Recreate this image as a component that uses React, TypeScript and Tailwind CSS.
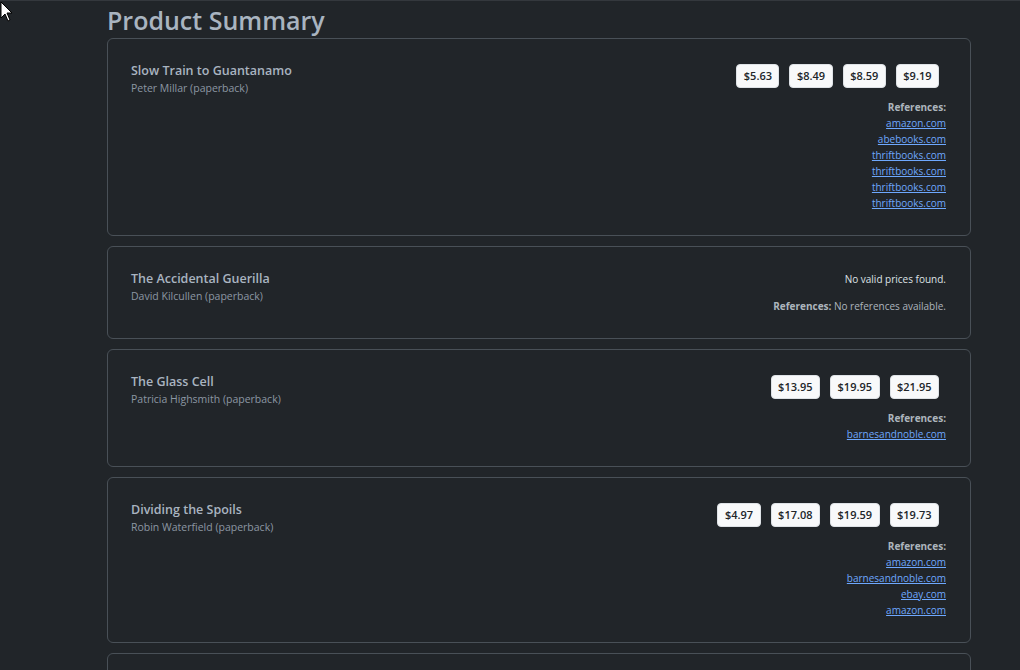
import React from "react";

type Product = {
  title: string;
  author: string;
  prices: string[];
  refs: string[];
};

const products: Product[] = [
  {
    title: "Slow Train to Guantanamo",
    author: "Peter Millar (paperback)",
    prices: ["$5.63", "$8.49", "$8.59", "$9.19"],
    refs: ["amazon.com", "abebooks.com", "thriftbooks.com", "thriftbooks.com", "thriftbooks.com", "thriftbooks.com"],
  },
  {
    title: "The Accidental Guerilla",
    author: "David Kilcullen (paperback)",
    prices: [],
    refs: [],
  },
  {
    title: "The Glass Cell",
    author: "Patricia Highsmith (paperback)",
    prices: ["$13.95", "$19.95", "$21.95"],
    refs: ["barnesandnoble.com"],
  },
  {
    title: "Dividing the Spoils",
    author: "Robin Waterfield (paperback)",
    prices: ["$4.97", "$17.08", "$19.59", "$19.73"],
    refs: ["amazon.com", "barnesandnoble.com", "ebay.com", "amazon.com"],
  },
];

function Card({ p }: { p: Product }) {
  return (
    <div className="flex justify-between rounded-[6px] border border-[#495057] pt-[23px] pb-[24px] pl-[23px] pr-[24px]">
      <div className="flex flex-col">
        <div className="text-[12.5px] leading-[18px] font-semibold text-[#a9b4c0]">{p.title}</div>
        <div className="text-[10.5px] leading-[16px] text-[#8c97a3]">{p.author}</div>
      </div>
      <div className="flex flex-col items-end text-[10px] leading-[16px]">
        {p.prices.length > 0 ? (
          <div className="flex pt-[2px] pr-[2px]">
            {p.prices.map((pr, i) => (
              <span
                key={i}
                className="mx-[5px] flex h-[24px] items-center rounded-[4px] border border-[#dee2e6] bg-[#f8f9fa] px-[6.5px] text-[11px] font-semibold text-[#212529]"
              >
                {pr}
              </span>
            ))}
          </div>
        ) : (
          <div className="pt-[1px] text-[#dee2e6]">No valid prices found.</div>
        )}
        {p.refs.length > 0 ? (
          <div className="mt-[11px] flex flex-col items-end">
            <div className="font-bold text-[#adb5bd]">References:</div>
            {p.refs.map((r, i) => (
              <a key={i} href="#" className="text-[#6ea8fe] underline">
                {r}
              </a>
            ))}
          </div>
        ) : (
          <div className="mt-[11px] text-[#adb5bd]">
            <span className="font-bold">References:</span> No references available.
          </div>
        )}
      </div>
    </div>
  );
}

export default function App() {
  return (
    <div
      className="relative h-[670px] w-full overflow-hidden border-t border-[#34383d] bg-[#212529] text-[#dee2e6]"
      style={{ fontFamily: '"Open Sans", "Noto Sans", sans-serif' }}
    >
      <svg className="absolute left-0 top-0" width="14" height="22" viewBox="0 0 14 22">
        <path d="M1 1 L1 17 L5 13 L8 20 L10 19 L7 12 L12 12 Z" fill="#fff" stroke="#000" strokeWidth="1" />
      </svg>
      <div className="ml-[107px] w-[864px]">
        <h1 className="pt-[1px] text-[25px] leading-[36px] font-semibold text-[#a9b4c0]">Product Summary</h1>
        <div className="flex flex-col gap-[10px]">
          {products.map((p, i) => (
            <Card key={i} p={p} />
          ))}
          <div className="h-[60px] rounded-[6px] border border-[#495057]" />
        </div>
      </div>
    </div>
  );
}
